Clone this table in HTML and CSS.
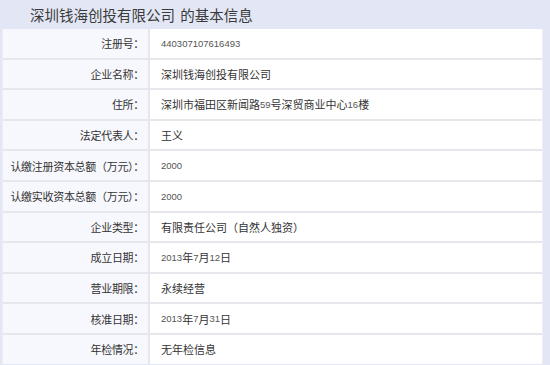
FILE: index.html
```html
<!DOCTYPE html>
<html lang="zh-CN">
<head>
<meta charset="utf-8">
<link rel="stylesheet" href="styles.css">
</head>
<body>
<div class="page">
  <h1 class="title">深圳钱海创投有限公司 的基本信息</h1>
  <div class="info">
    <div class="label">注册号：</div><div class="value"><span class="num">440307107616493</span></div>
    <div class="label">企业名称：</div><div class="value">深圳钱海创投有限公司</div>
    <div class="label">住所：</div><div class="value">深圳市福田区新闻路<span class="num">59</span>号深贸商业中心<span class="num">16</span>楼</div>
    <div class="label">法定代表人：</div><div class="value">王义</div>
    <div class="label">认缴注册资本总额（万元）：</div><div class="value"><span class="num">2000</span></div>
    <div class="label">认缴实收资本总额（万元）：</div><div class="value"><span class="num">2000</span></div>
    <div class="label">企业类型：</div><div class="value">有限责任公司（自然人独资）</div>
    <div class="label">成立日期：</div><div class="value"><span class="num">2013</span>年<span class="num">7</span>月<span class="num">12</span>日</div>
    <div class="label">营业期限：</div><div class="value">永续经营</div>
    <div class="label">核准日期：</div><div class="value"><span class="num">2013</span>年<span class="num">7</span>月<span class="num">31</span>日</div>
    <div class="label">年检情况：</div><div class="value">无年检信息</div>
  </div>
</div>
</body>
</html>
```

FILE: styles.css
```css
html, body {
  margin: 0;
  padding: 0;
  background: #e3e7f5;
}
body {
  width: 550px;
  height: 365px;
  overflow: hidden;
  font-family: "Noto Sans CJK SC", sans-serif;
  color: #333;
}
.page {
  padding: 0 7px 0 2px;
}
.title {
  margin: 0;
  height: 29px;
  line-height: 29px;
  padding-left: 28px;
  font-size: 14.5px;
  font-weight: normal;
  color: #3a3a3a;
  word-spacing: 2px;
}
.info {
  display: grid;
  grid-template-columns: 145px 1fr;
  grid-auto-rows: 28.6px;
  gap: 2px 2px;
  background: #e6e7ec;
  border-left: 1px solid #eceef6;
  border-right: 1px solid #eceef6;
}
.label,
.value {
  display: flex;
  align-items: center;
  font-size: 11px;
  white-space: nowrap;
}
.label {
  justify-content: flex-end;
  padding-right: 4px;
  background: #f7f8fd;
  color: #333;
  letter-spacing: -0.3px;
}
.value {
  padding-left: 11px;
  background: #fff;
  color: #333;
}
.num {
  font-family: "Liberation Sans", sans-serif;
  font-size: 9.5px;
  color: #555;
}
```
